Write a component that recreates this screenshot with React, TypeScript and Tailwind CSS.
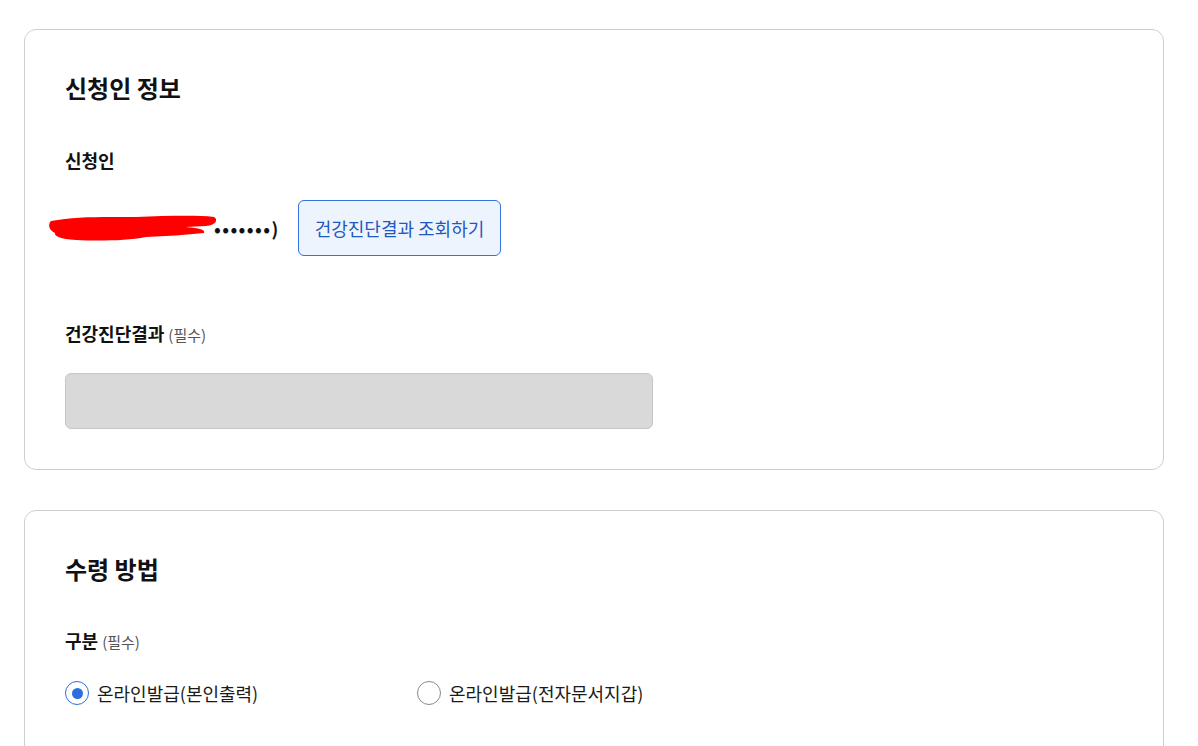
import { useState } from "react"

const font = { fontFamily: '"Noto Sans CJK KR", "Noto Sans", sans-serif' }

function Redacted() {
  return (
    <div className="flex items-center">
      <svg width="172" height="30" viewBox="0 0 172 30" className="-ml-[19px] shrink-0">
        <path d="M5 8 C30 3 60 4 90 4 C120 3 150 2 168 4 C172 6 171 12 160 13 L140 14 C150 15 160 16 158 20 C140 22 120 23 100 24 C80 28 50 28 30 27 C14 26 8 23 9 20 C4 18 1 12 5 8 Z" fill="#ff0000" />
      </svg>
      <span className="-ml-[4px] text-[18px] font-bold tracking-[1.4px] text-[#111]">•••••••)</span>
    </div>
  )
}

function Radio({ checked, label, onClick }: { checked: boolean; label: string; onClick: () => void }) {
  return (
    <button type="button" onClick={onClick} className="flex w-[352px] items-center gap-2 text-left">
      <span
        className={
          checked
            ? "flex h-6 w-6 items-center justify-center rounded-full border border-[#2b6ee0] bg-white"
            : "flex h-6 w-6 items-center justify-center rounded-full border border-[#8a8a8a] bg-white"
        }
      >
        {checked && <span className="h-[11px] w-[11px] rounded-full bg-[#2b6ee0]" />}
      </span>
      <span className="text-[18px] leading-6 text-[#1a1a1a]">{label}</span>
    </button>
  )
}

function Label({ text, required }: { text: string; required?: boolean }) {
  return (
    <p className="text-[18px] font-bold leading-6 text-[#111]">
      {text}
      {required && <span className="ml-1 text-[15px] leading-none font-normal text-[#555]">(필수)</span>}
    </p>
  )
}

export default function App() {
  const [method, setMethod] = useState(0)

  return (
    <div className="min-h-screen bg-white pt-[29px] pl-[24px]" style={font}>
      {/* 신청인 정보 */}
      <section className="w-[1140px] rounded-xl border border-[#cfcfcf] p-10">
        <h2 className="text-[24px] font-bold leading-9 text-[#111]">신청인 정보</h2>
        <div className="mt-[42px]">
          <Label text="신청인" />
        </div>
        <div className="mt-[28px] flex items-center gap-[18px]">
          <Redacted />
          <button
            type="button"
            className="h-14 rounded-md border border-[#3473e0] bg-[#eef4fe] px-[16px] text-[18px] text-[#1f58c0]"
          >
            건강진단결과 조회하기
          </button>
        </div>
        <div className="mt-[65px]">
          <Label text="건강진단결과" required />
        </div>
        <div className="mt-[28px] h-14 w-[588px] rounded-md border border-[#c6c6c6] bg-[#d9d9d9]" />
      </section>

      {/* 수령 방법 */}
      <section className="mt-10 w-[1140px] rounded-xl border border-[#cfcfcf] px-10 pt-10 pb-16">
        <h2 className="text-[24px] font-bold leading-9 text-[#111]">수령 방법</h2>
        <div className="mt-[41px]">
          <Label text="구분" required />
        </div>
        <div className="mt-[29px] flex items-center">
          <Radio checked={method === 0} label="온라인발급(본인출력)" onClick={() => setMethod(0)} />
          <Radio checked={method === 1} label="온라인발급(전자문서지갑)" onClick={() => setMethod(1)} />
        </div>
      </section>
    </div>
  )
}
